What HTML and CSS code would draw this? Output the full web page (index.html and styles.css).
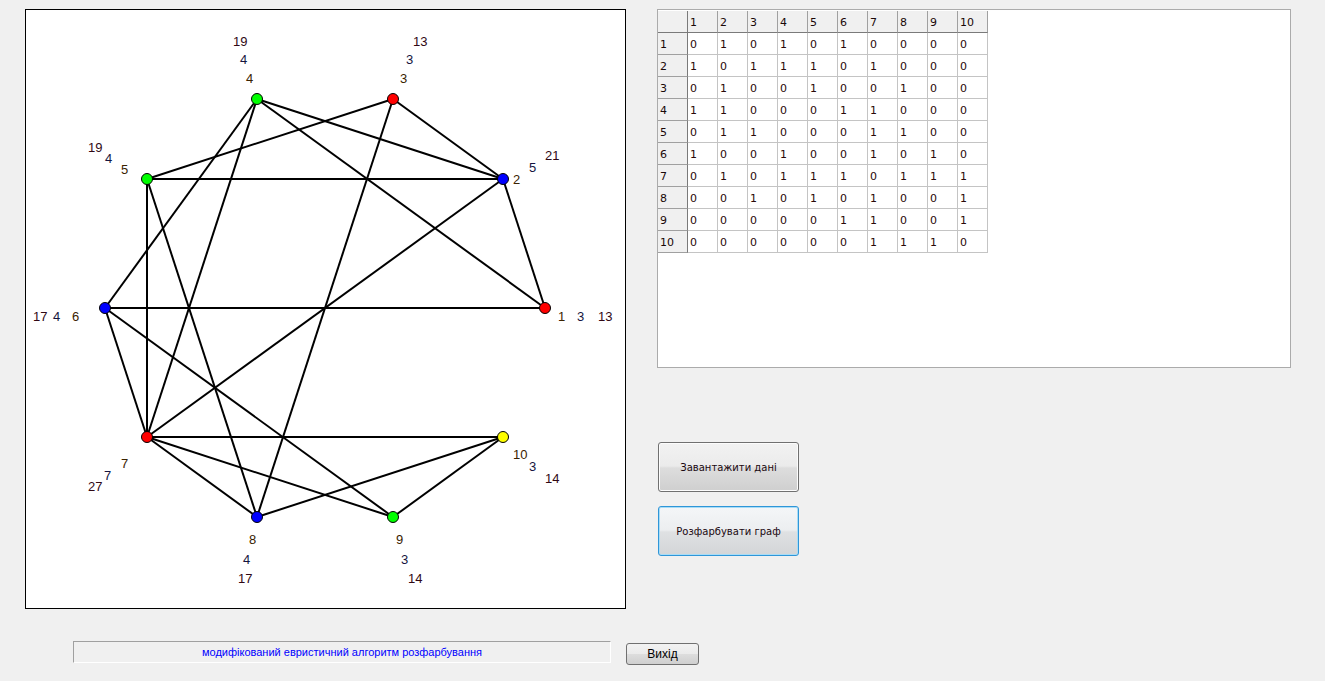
FILE: index.html
```html
<!DOCTYPE html>
<html lang="uk">
<head>
<meta charset="utf-8">
<title>Розфарбування графа</title>
<link rel="stylesheet" href="styles.css">
</head>
<body>
<div class="app">
  <div class="top">
    <div class="canvas">
      <svg class="graph" width="599" height="598" viewBox="26 10 599 598" xmlns="http://www.w3.org/2000/svg">
        <g class="edges">
          <line x1="545" y1="308" x2="503" y2="179"/>
          <line x1="545" y1="308" x2="257" y2="99"/>
          <line x1="545" y1="308" x2="105" y2="308"/>
          <line x1="503" y1="179" x2="393" y2="99"/>
          <line x1="503" y1="179" x2="257" y2="99"/>
          <line x1="503" y1="179" x2="147" y2="179"/>
          <line x1="503" y1="179" x2="147" y2="437"/>
          <line x1="393" y1="99" x2="147" y2="179"/>
          <line x1="393" y1="99" x2="257" y2="517"/>
          <line x1="257" y1="99" x2="105" y2="308"/>
          <line x1="257" y1="99" x2="147" y2="437"/>
          <line x1="147" y1="179" x2="147" y2="437"/>
          <line x1="147" y1="179" x2="257" y2="517"/>
          <line x1="105" y1="308" x2="147" y2="437"/>
          <line x1="105" y1="308" x2="393" y2="517"/>
          <line x1="147" y1="437" x2="257" y2="517"/>
          <line x1="147" y1="437" x2="393" y2="517"/>
          <line x1="147" y1="437" x2="503" y2="437"/>
          <line x1="257" y1="517" x2="503" y2="437"/>
          <line x1="393" y1="517" x2="503" y2="437"/>
        </g>
        <g class="nodes">
          <circle cx="545" cy="308" r="5.5" class="red"/>
          <circle cx="503" cy="179" r="5.5" class="blue"/>
          <circle cx="393" cy="99" r="5.5" class="red"/>
          <circle cx="257" cy="99" r="5.5" class="green"/>
          <circle cx="147" cy="179" r="5.5" class="green"/>
          <circle cx="105" cy="308" r="5.5" class="blue"/>
          <circle cx="147" cy="437" r="5.5" class="red"/>
          <circle cx="257" cy="517" r="5.5" class="blue"/>
          <circle cx="393" cy="517" r="5.5" class="green"/>
          <circle cx="503" cy="437" r="5.5" class="yellow"/>
        </g>
        <g class="labels">
          <text x="558" y="321" class="l1">1</text><text x="577" y="321" class="l2">3</text><text x="598" y="321" class="l3">13</text>
          <text x="513" y="184" class="l1">2</text><text x="529" y="172" class="l2">5</text><text x="545" y="160" class="l3">21</text>
          <text x="400" y="83" class="l1">3</text><text x="406" y="64" class="l2">3</text><text x="413" y="46" class="l3">13</text>
          <text x="246" y="83" class="l1">4</text><text x="240" y="64" class="l2">4</text><text x="233" y="46" class="l3">19</text>
          <text x="121" y="174" class="l1">5</text><text x="105" y="163" class="l2">4</text><text x="88" y="152" class="l3">19</text>
          <text x="72" y="321" class="l1">6</text><text x="53" y="321" class="l2">4</text><text x="33" y="321" class="l3">17</text>
          <text x="121" y="468" class="l1">7</text><text x="104" y="480" class="l2">7</text><text x="88" y="491" class="l3">27</text>
          <text x="249" y="544" class="l1">8</text><text x="243" y="564" class="l2">4</text><text x="238" y="583" class="l3">17</text>
          <text x="396" y="544" class="l1">9</text><text x="401" y="564" class="l2">3</text><text x="408" y="583" class="l3">14</text>
          <text x="513" y="459" class="l1">10</text><text x="529" y="471" class="l2">3</text><text x="545" y="483" class="l3">14</text>
        </g>
      </svg>
    </div>
    <div class="side">
      <div class="gridbox">
        <div class="matrix">
          <div class="hd corner"></div>
          <div class="hd">1</div><div class="hd">2</div><div class="hd">3</div><div class="hd">4</div><div class="hd">5</div><div class="hd">6</div><div class="hd">7</div><div class="hd">8</div><div class="hd">9</div><div class="hd">10</div>

          <div class="hd rh">1</div><div class="c">0</div><div class="c">1</div><div class="c">0</div><div class="c">1</div><div class="c">0</div><div class="c">1</div><div class="c">0</div><div class="c">0</div><div class="c">0</div><div class="c">0</div>
          <div class="hd rh">2</div><div class="c">1</div><div class="c">0</div><div class="c">1</div><div class="c">1</div><div class="c">1</div><div class="c">0</div><div class="c">1</div><div class="c">0</div><div class="c">0</div><div class="c">0</div>
          <div class="hd rh">3</div><div class="c">0</div><div class="c">1</div><div class="c">0</div><div class="c">0</div><div class="c">1</div><div class="c">0</div><div class="c">0</div><div class="c">1</div><div class="c">0</div><div class="c">0</div>
          <div class="hd rh">4</div><div class="c">1</div><div class="c">1</div><div class="c">0</div><div class="c">0</div><div class="c">0</div><div class="c">1</div><div class="c">1</div><div class="c">0</div><div class="c">0</div><div class="c">0</div>
          <div class="hd rh">5</div><div class="c">0</div><div class="c">1</div><div class="c">1</div><div class="c">0</div><div class="c">0</div><div class="c">0</div><div class="c">1</div><div class="c">1</div><div class="c">0</div><div class="c">0</div>
          <div class="hd rh">6</div><div class="c">1</div><div class="c">0</div><div class="c">0</div><div class="c">1</div><div class="c">0</div><div class="c">0</div><div class="c">1</div><div class="c">0</div><div class="c">1</div><div class="c">0</div>
          <div class="hd rh">7</div><div class="c">0</div><div class="c">1</div><div class="c">0</div><div class="c">1</div><div class="c">1</div><div class="c">1</div><div class="c">0</div><div class="c">1</div><div class="c">1</div><div class="c">1</div>
          <div class="hd rh">8</div><div class="c">0</div><div class="c">0</div><div class="c">1</div><div class="c">0</div><div class="c">1</div><div class="c">0</div><div class="c">1</div><div class="c">0</div><div class="c">0</div><div class="c">1</div>
          <div class="hd rh">9</div><div class="c">0</div><div class="c">0</div><div class="c">0</div><div class="c">0</div><div class="c">0</div><div class="c">1</div><div class="c">1</div><div class="c">0</div><div class="c">0</div><div class="c">1</div>
          <div class="hd rh">10</div><div class="c">0</div><div class="c">0</div><div class="c">0</div><div class="c">0</div><div class="c">0</div><div class="c">0</div><div class="c">1</div><div class="c">1</div><div class="c">1</div><div class="c">0</div>
        </div>
      </div>
      <div class="actions">
        <button class="btn">Завантажити дані</button>
        <button class="btn focused">Розфарбувати граф</button>
      </div>
    </div>
  </div>
  <div class="bottom">
    <div class="status">модифікований евристичний алгоритм розфарбування</div>
    <button class="exit">Вихід</button>
  </div>
</div>
</body>
</html>
```

FILE: styles.css
```css
* { box-sizing: border-box; }

html, body {
  margin: 0;
  padding: 0;
  background: #f0f0f0;
  width: 1325px;
  height: 681px;
  overflow: hidden;
}

.app {
  padding: 9px 0 0 25px;
  font-family: "DejaVu Sans", sans-serif;
}

.top {
  display: flex;
  align-items: flex-start;
  gap: 31px;
}

.canvas {
  width: 601px;
  height: 600px;
  border: 1px solid #000;
  background: #fff;
}

.graph { display: block; }

.edges line {
  stroke: #000;
  stroke-width: 2;
}

.nodes circle {
  stroke: #000;
  stroke-width: 1;
}
.nodes .red { fill: #ff0000; }
.nodes .blue { fill: #0000ff; }
.nodes .green { fill: #00ff00; }
.nodes .yellow { fill: #ffff00; }

.labels text {
  font-family: "Liberation Sans", sans-serif;
  font-size: 13px;
}
.labels .l1 { fill: #3a2200; }
.labels .l2 { fill: #141440; }
.labels .l3 { fill: #300814; }

.side {
  width: 634px;
  display: flex;
  flex-direction: column;
}

.gridbox {
  height: 359px;
  border: 1px solid #ababab;
  background: #fff;
  padding-top: 1px;
}

.matrix {
  display: grid;
  grid-template-columns: repeat(11, 30px);
  grid-auto-rows: 22px;
  width: 330px;
  font-size: 11px;
  color: #2a0808;
}

.matrix > div {
  border-right: 1px solid #c4c4c4;
  border-bottom: 1px solid #c4c4c4;
  padding: 1px 0 0 2px;
  display: flex;
  align-items: center;
  line-height: 1;
}

.matrix .hd {
  background: #f0f0f0;
  border-right-color: #a0a0a0;
  border-bottom: 1px solid #7a7a7a;
  color: #1a0808;
}
.matrix .rh {
  border-right: 1px solid #7a7a7a;
  border-bottom-color: #a0a0a0;
}
.matrix .corner {
  border-right: 1px solid #7a7a7a;
}

.actions {
  margin: 74px 0 0 1px;
  display: flex;
  flex-direction: column;
  gap: 14px;
}

.btn {
  width: 141px;
  height: 50px;
  border: 1px solid #707070;
  border-radius: 3px;
  background: linear-gradient(#f2f2f2 0%, #ebebeb 48%, #dddddd 52%, #cfcfcf 100%);
  box-shadow: inset 0 0 0 1px #fcfcfc;
  font-family: "DejaVu Sans", sans-serif;
  font-size: 10px;
  color: #1a0810;
  padding: 0;
}

.btn.focused {
  border-color: #2f96d8;
  box-shadow: inset 0 0 0 1px #a8dcf6;
  background: linear-gradient(#f4f6f8 0%, #eceef0 48%, #dfe1e3 52%, #d3d5d7 100%);
}

.bottom {
  margin-top: 32px;
  padding-left: 48px;
  display: flex;
  align-items: flex-start;
  gap: 15px;
}

.status {
  width: 538px;
  height: 22px;
  border-top: 1px solid #a0a0a0;
  border-left: 1px solid #a0a0a0;
  border-bottom: 1px solid #ffffff;
  border-right: 1px solid #ffffff;
  font-family: "Liberation Sans", sans-serif;
  font-size: 11px;
  color: #0000ff;
  text-align: center;
  line-height: 20px;
}

.exit {
  margin-top: 2px;
  width: 73px;
  height: 22px;
  border: 1px solid #707070;
  border-radius: 3px;
  background: linear-gradient(#f2f2f2 0%, #ebebeb 48%, #dddddd 52%, #cfcfcf 100%);
  font-family: "Liberation Sans", sans-serif;
  font-size: 12px;
  color: #000;
  padding: 0;
}
```
